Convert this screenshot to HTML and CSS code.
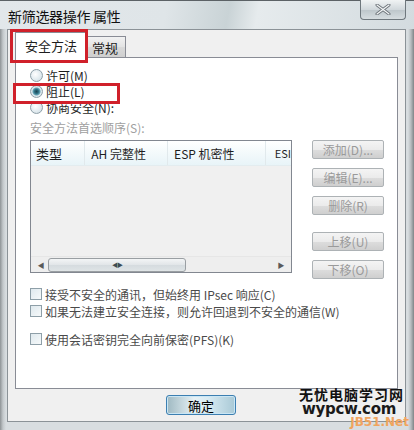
FILE: index.html
```html
<!DOCTYPE html>
<html>
<head>
<meta charset="utf-8">
<link rel="stylesheet" href="styles.css">
</head>
<body>
<div class="window">
  <div class="titlebar">
    <span class="title">新筛选器操作 属性</span>
    <div class="close"><svg width="18" height="11" viewBox="0 0 18 11"><path d="M3 1 L15 10 M15 1 L3 10" stroke="#6b7278" stroke-width="3" stroke-linecap="round"/><path d="M3 1 L15 10 M15 1 L3 10" stroke="#f4f6f7" stroke-width="1.2" stroke-linecap="round"/></svg></div>
  </div>
  <div class="client">
    <div class="tabs">
      <div class="tab active">安全方法</div>
      <div class="tab">常规</div>
    </div>
    <div class="panel">
      <div class="radios">
        <div class="opt"><span class="radio"></span><span>许可(M)</span></div>
        <div class="opt"><span class="radio on"></span><span>阻止(L)</span></div>
        <div class="opt"><span class="radio"></span><span>协商安全(N):</span></div>
      </div>
      <div class="label">安全方法首选顺序(S):</div>
      <div class="listrow">
        <div class="list">
          <div class="head">
            <div class="col c1">类型</div>
            <div class="col c2">AH 完整性</div>
            <div class="col c3">ESP 机密性</div>
            <div class="col c4">ESI</div>
          </div>
          <div class="body"></div>
          <div class="hscroll">
            <span class="arr">&#9664;</span>
            <div class="thumb"><span class="grip">&#9664;&#9654;</span></div>
            <span class="fill"></span>
            <span class="arr">&#9654;</span>
          </div>
        </div>
        <div class="btns">
          <div class="btn">添加(D)...</div>
          <div class="btn">编辑(E)...</div>
          <div class="btn">删除(R)</div>
          <div class="btn gap">上移(U)</div>
          <div class="btn">下移(O)</div>
        </div>
      </div>
      <div class="checks">
        <div class="opt"><span class="cb"></span><span>接受不安全的通讯，但始终用 IPsec 响应(C)</span></div>
        <div class="opt"><span class="cb"></span><span>如果无法建立安全连接，则允许回退到不安全的通信(W)</span></div>
        <div class="opt sep"><span class="cb"></span><span>使用会话密钥完全向前保密(PFS)(K)</span></div>
      </div>
    </div>
    <div class="footer">
      <div class="ok">确定</div>
    </div>
    <div class="mark m1"></div>
    <div class="mark m2"></div>
  </div>
  <div class="watermark">
    <div class="wm1">无忧电脑学习网</div>
    <div class="wm2">wypcw.com</div>
    <div class="wm3">JB51.Net</div>
  </div>
</div>
</body>
</html>
```
FILE: styles.css
```css
* { box-sizing: border-box; }
html, body { margin: 0; padding: 0; }
body {
  width: 414px; height: 430px; overflow: hidden;
  font-family: "Noto Sans CJK SC", "Liberation Sans", sans-serif;
  font-size: 12px; color: #1e1e1e;
}
.window {
  position: relative;
  width: 414px; height: 430px;
  display: flex; flex-direction: column;
  background: linear-gradient(90deg, #8e9396 0px, #c3c8cb 3px, #d8dde0 6px, #d8dde0 408px, #b5babd 411px, #7f8487 414px);
}
.titlebar {
  height: 29px; display: flex; align-items: center; justify-content: space-between;
  padding-left: 8px; padding-right: 8px;
  background: linear-gradient(100deg, #e2e7ea 0%, #dfe5e8 40%, #c9d3d6 55%, #e6ebed 62%, #d3dbdf 100%);
  border-top: 1px solid #5c6266;
}
.title { font-size: 14px; color: #111; letter-spacing: -0.3px; padding-top: 1px; }
.close {
  align-self: flex-start; margin-top: -1px;
  width: 46px; height: 20px;
  border: 1px solid #6e777d; border-top: none;
  border-radius: 0 0 4px 4px;
  background: linear-gradient(#f0f3f4, #d1d8dc 50%, #bcc5ca 51%, #d6dde0);
  display: flex; align-items: center; justify-content: center;
}
.client {
  position: relative;
  flex: 1; margin: 0 8px 8px 7px;
  background: #f0f0f0;
  border: 1px solid #8b9297;
  display: flex; flex-direction: column;
}
.tabs {
  display: flex; align-items: flex-end;
  height: 27px; padding-left: 7px; position: relative; z-index: 2;
}
.tab {
  height: 21px; padding: 0 7px;
  border: 1px solid #898c95; border-bottom: none;
  background: linear-gradient(#f2f2f2, #e3e3e3 50%, #d9d9d9 51%, #cfcfcf);
  display: flex; align-items: center; font-size: 13px; margin-bottom: 0;
}
.tab.active {
  height: 26px; margin-right: -2px; padding: 0 8px 0 9px;
  background: #fff; margin-bottom: -1px; position: relative; z-index: 3;
}
.panel {
  margin: 0 7px 0 7px; height: 332px;
  border: 1px solid #898c95; background: #fff;
  padding: 9px 0 0 14px;
  display: flex; flex-direction: column;
}
.radios { display: flex; flex-direction: column; }
.opt { display: flex; align-items: center; height: 16px; gap: 3px; }
.radio {
  width: 13px; height: 13px; border-radius: 50%;
  border: 1px solid #8e9fa8;
  background: radial-gradient(circle at 40% 40%, #ffffff, #dfe9ee 60%, #c5d4dc);
}
.radio.on {
  background: radial-gradient(circle, #1a4452 0, #2d6d80 2px, #63a4b6 3.5px, #dfe9ee 4.5px, #c5d4dc 100%);
}
.label { color: #a0a0a0; margin-top: 5px; height: 16px; line-height: 16px; }
.listrow { display: flex; gap: 20px; margin-top: 4px; }
.list {
  width: 262px; height: 133px;
  border: 1px solid #828790; background: #f0f0f0;
  display: flex; flex-direction: column;
}
.head {
  height: 25px; display: flex;
  background: linear-gradient(#ffffff, #f3f9fb 50%, #e8f4f8);
  border-bottom: 1px solid #e3ecef;
}
.col { display: flex; align-items: center; padding-left: 5px; border-right: 1px solid #e1e9ec; font-size: 13px; }
.c1 { width: 55px; }
.c2 { width: 84px; padding-left: 6px; font-size: 12px; }
.c3 { width: 99px; padding-left: 6px; font-size: 12px; }
.c4 { flex: 1; border-right: none; font-size: 11px; padding-left: 9px; }
.body { flex: 1; }
.hscroll {
  height: 16px; display: flex; align-items: center;
  background: #eeeeee; border-top: 1px solid #e6e6e6; padding: 0 3px;
}
.arr { font-size: 7px; color: #5a5a5a; width: 14px; text-align: center; }
.thumb {
  width: 138px; height: 14px;
  border: 1px solid #9a9fa3; border-radius: 3px;
  background: linear-gradient(#f3f5f6, #e1e5e8 50%, #d5dbdf 51%, #dfe4e6);
  display: flex; align-items: center; justify-content: center;
}
.grip { font-size: 6px; color: #3d4b52; letter-spacing: -1px; }
.fill { flex: 1; }
.btns { display: flex; flex-direction: column; gap: 9px; }
.btn {
  width: 72px; height: 19px;
  border: 1px solid #adb2b5; border-radius: 2px;
  background: linear-gradient(#f4f4f4, #ebebeb 50%, #dddddd 51%, #cfcfcf);
  color: #9a9a9a; font-size: 12px;
  display: flex; align-items: center; justify-content: center;
}
.btn.gap { margin-top: 8px; }
.checks { display: flex; flex-direction: column; margin-top: 7px; gap: 1px; color: #4a4a4a; }
.cb {
  width: 12px; height: 12px; border: 1px solid #8e9fa8;
  background: linear-gradient(135deg, #dfe9ee, #f6f9fa);
}
.checks .sep { margin-top: 11px; }
.footer { flex: 1; padding: 6px 0 0 158px; }
.ok {
  width: 70px; height: 20px;
  border: 1px solid #3c7fb1; border-radius: 3px;
  background: linear-gradient(90deg, #9fb9c2 0%, #e6f1f5 40%, #d8ebf3 60%, #a9c9d6 100%);
  display: flex; align-items: center; justify-content: center;
  font-size: 13px; color: #000;
  box-shadow: inset 0 0 0 1px #c9e6f5;
}
.mark { position: absolute; border: 3px solid #d0202a; z-index: 5; }
.m1 { left: 2px; top: -1px; width: 78px; height: 34px; }
.m2 { left: 5px; top: 53px; width: 107px; height: 21px; }
.watermark {
  position: absolute; right: 2px; bottom: 1px; width: 120px; height: 42px;
  font-weight: bold; white-space: nowrap;
}
.wm1 {
  position: absolute; right: 8px; top: 0; height: 15px;
  font-family: "Noto Sans CJK SC", sans-serif;
  font-size: 14px; line-height: 15px; color: #111; letter-spacing: 1px; z-index: 2;
}
.wm2 {
  position: absolute; right: 16px; top: 15px; height: 14px;
  font-family: "DejaVu Sans", sans-serif;
  font-size: 15px; line-height: 14px; color: #1a1a1a; letter-spacing: -0.3px; z-index: 2;
}
.wm3 {
  position: absolute; right: 3px; top: 29px; height: 12px;
  font-family: "DejaVu Sans", sans-serif;
  font-size: 12px; line-height: 12px; color: #f0a45e; z-index: 1;
}
```
